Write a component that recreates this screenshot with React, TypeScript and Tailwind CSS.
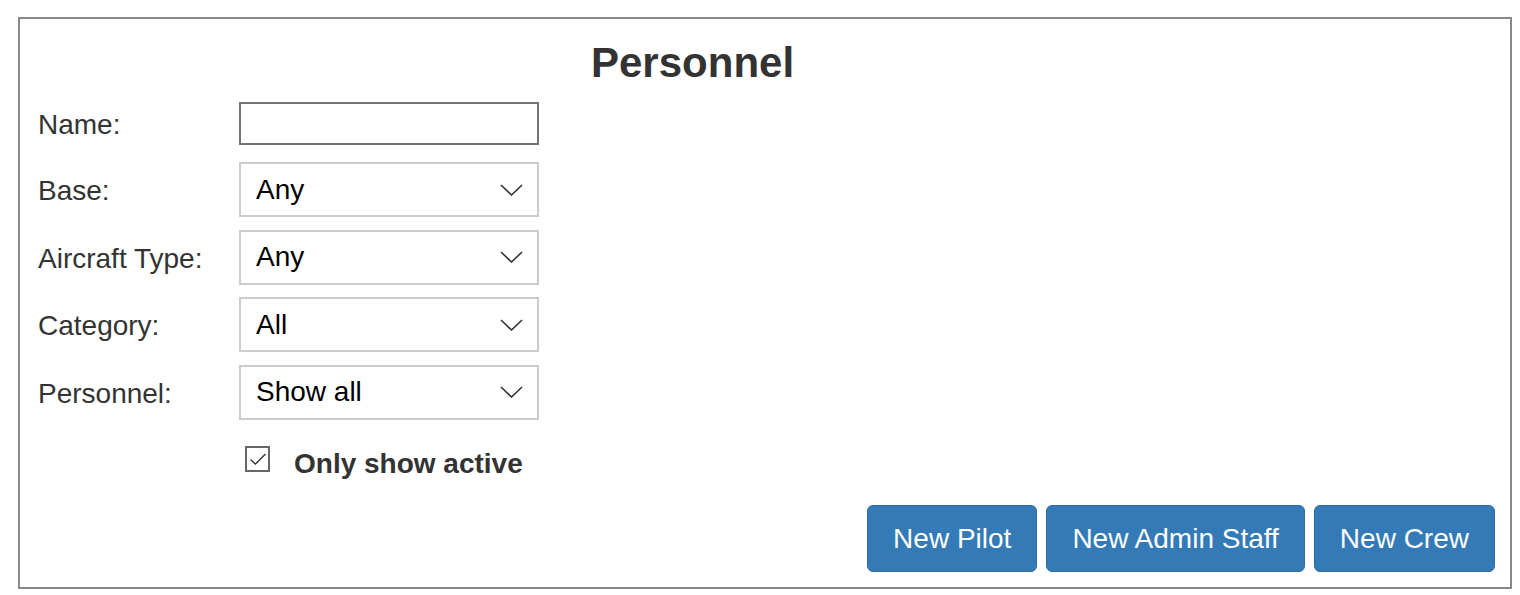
import React from "react";

type SelectBoxProps = {
  value: string;
};

function SelectBox({ value }: SelectBoxProps) {
  return (
    <div className="flex h-[55px] w-[300px] items-center justify-between border-2 border-[#cccccc] bg-white pl-[15px] pr-[14px] text-[28px] text-black">
      <span>{value}</span>
      <svg width="23" height="12" viewBox="0 0 23 12" fill="none">
        <polyline points="1,1 11.5,11 22,1" stroke="#333" strokeWidth="1.6" />
      </svg>
    </div>
  );
}

function Row({ label, children }: { label: string; children: React.ReactNode }) {
  return (
    <div className="flex items-center">
      <label className="mt-[3px] w-[201px] text-[28px] text-[#333]">{label}</label>
      {children}
    </div>
  );
}

export default function App() {
  const selects = [
    { label: "Base:", value: "Any" },
    { label: "Aircraft Type:", value: "Any" },
    { label: "Category:", value: "All" },
    { label: "Personnel:", value: "Show all" },
  ];

  return (
    <div className="h-[595px] w-[1520px] bg-white pl-[18px] pt-[17px] font-['Liberation_Sans',Arial,sans-serif]">
      <div className="flex h-[572px] w-[1494px] flex-col border-2 border-[#888888]">
        <h1 className="ml-[571px] mt-[23px] text-[42px] font-bold leading-none text-[#333]">
          Personnel
        </h1>

        <div className="ml-[18px] mt-[16.5px] flex flex-col">
          <Row label="Name:">
            <input
              type="text"
              className="h-[43px] w-[300px] border-2 border-[#747474] bg-white px-2 text-[24px] outline-none"
            />
          </Row>

          <div className="mt-[16.5px] flex flex-col gap-[12.5px]">
            {selects.map((s) => (
              <Row key={s.label} label={s.label}>
                <SelectBox value={s.value} />
              </Row>
            ))}
          </div>

          <div className="ml-[207px] mt-[23px] flex items-center gap-[24px]">
            <div className="-mt-[10px] flex h-[26px] w-[25px] items-center justify-center border-2 border-[#666]">
              <svg width="18" height="14" viewBox="0 0 18 14" fill="none">
                <polyline points="1.5,7.5 6.5,12 16.5,2" stroke="#333" strokeWidth="1.4" />
              </svg>
            </div>
            <span className="text-[28px] font-bold text-[#333]">Only show active</span>
          </div>
        </div>

        <div className="mr-[15px] mt-[20.5px] flex justify-end gap-[9px]">
          <button className="h-[67px] rounded-[6px] border border-[#2e6da4] bg-[#337ab7] px-[25px] text-[28px] text-white">
            New Pilot
          </button>
          <button className="h-[67px] rounded-[6px] border border-[#2e6da4] bg-[#337ab7] px-[25px] text-[28px] text-white">
            New Admin Staff
          </button>
          <button className="h-[67px] rounded-[6px] border border-[#2e6da4] bg-[#337ab7] px-[25px] text-[28px] text-white">
            New Crew
          </button>
        </div>
      </div>
    </div>
  );
}
